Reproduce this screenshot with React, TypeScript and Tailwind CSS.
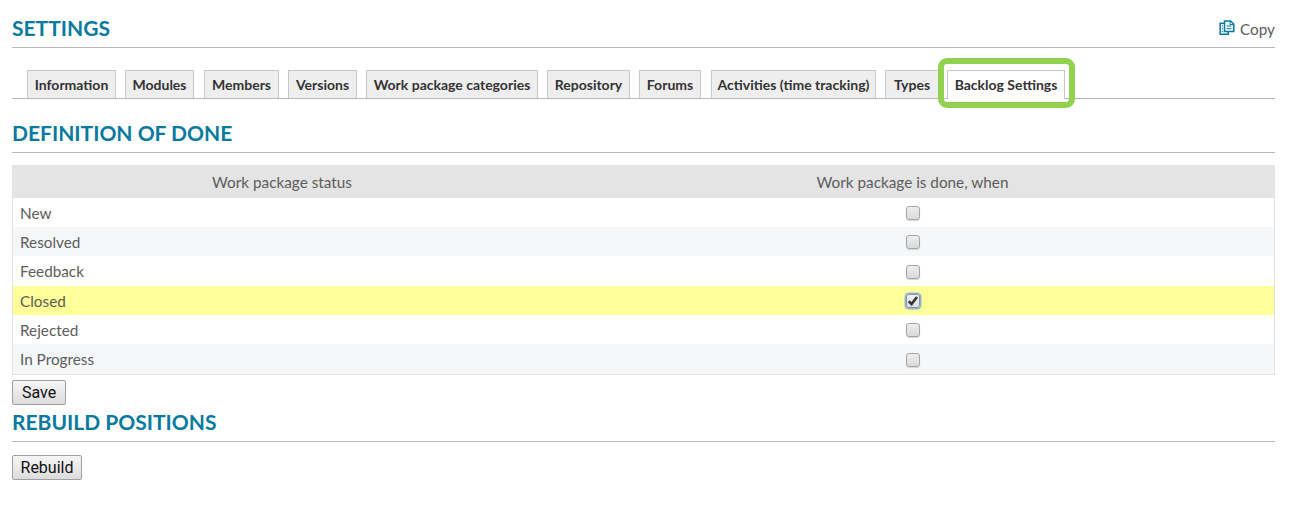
import { useState } from 'react';

const tabs = [
  { label: 'Information', size: 'w-[89px] mr-[9px]' },
  { label: 'Modules', size: 'w-[69px] mr-[10px]' },
  { label: 'Members', size: 'w-[75px] mr-[9px]' },
  { label: 'Versions', size: 'w-[69px] mr-[9px]' },
  { label: 'Work package categories', size: 'w-[172px] mr-[9px]' },
  { label: 'Repository', size: 'w-[83px] mr-[9px]' },
  { label: 'Forums', size: 'w-[62px] mr-[10px]' },
  { label: 'Activities (time tracking)', size: 'w-[165px] mr-[9px]' },
  { label: 'Types', size: 'w-[54px] mr-[8px]' },
  { label: 'Backlog Settings', size: 'w-[118px]', active: true },
];

const statuses = [
  { name: 'New', row: 'h-[29px] bg-white' },
  { name: 'Resolved', row: 'h-[29px] bg-[#f5f7f9]' },
  { name: 'Feedback', row: 'h-[30px] bg-white' },
  { name: 'Closed', row: 'h-[29px] bg-[#ffff99]' },
  { name: 'Rejected', row: 'h-[29px] bg-white' },
  { name: 'In Progress', row: 'h-[30px] bg-[#f5f7f9]' },
];

function CopyIcon() {
  return (
    <svg width="16" height="16" viewBox="0 0 16 16" fill="none" stroke="#067aa3" strokeWidth="1.5">
      <path d="M5 3.2H1.2V14.3H9.3V12" />
      <path d="M5.5 1H11.5L14.8 4V11.6H5.5Z" fill="#fff" />
      <path d="M11 1V4.5H14.8" strokeWidth="1" />
      <path d="M7.5 6H12.5M7.5 8.7H12.5M2.8 6H4M2.8 8.7H4M2.8 11.4H4" strokeWidth="1" />
    </svg>
  );
}

function Checkbox({ checked, onToggle, label }: { checked: boolean; onToggle: () => void; label: string }) {
  return (
    <button
      type="button"
      role="checkbox"
      aria-checked={checked}
      aria-label={label}
      onClick={onToggle}
      className={
        checked
          ? 'flex size-[14px] items-center justify-center rounded-[3px] border border-[#8795a3] bg-linear-to-b from-[#f2f2f5] to-[#dddde5] shadow-[0_0_0_1.5px_#8bb5d6]'
          : 'flex size-[14px] items-center justify-center rounded-[3px] border border-[#a5a5a5] bg-linear-to-b from-[#eeeeee] to-[#dadada] shadow-[0_1px_1px_#d4d4d4]'
      }
    >
      {checked && (
        <svg className="size-[12px] shrink-0" viewBox="0 0 12 12" fill="none" stroke="#333" strokeWidth="2.6">
          <path d="M1.7 6.2L4.6 9L10 2" />
        </svg>
      )}
    </button>
  );
}

const heading = "text-[21px] leading-[26px] font-bold text-[#087a9f]";
const pushButton =
  'block h-[25px] rounded-[2px] border border-[#a0a0a0] bg-linear-to-b from-[#f6f6f6] to-[#dcdcdc] text-[16px] leading-[23px] text-[#111] font-[Roboto,sans-serif]';

export default function App() {
  const [done, setDone] = useState<string[]>(['Closed']);
  const toggle = (name: string) =>
    setDone((list) => (list.includes(name) ? list.filter((n) => n !== name) : [...list, name]));

  return (
    <main className="h-[523px] w-[1294px] bg-white pl-3 pr-[19px] pt-[15px] font-[Lato,sans-serif] text-[#5c5c5c]">
      <header className="flex h-[33px] justify-between border-b border-[#b8b8b8]">
        <h1 className={heading}>SETTINGS</h1>
        <a className="flex h-[29px] items-center gap-[5px] text-[15.3px]">
          <span className="-mt-[4px]"><CopyIcon /></span>
          Copy
        </a>
      </header>
      <nav className="mt-[22px] flex h-[29px] border-b border-[#b8b8b8] pl-[15px]">
        {tabs.map((tab) => (
          <div
            key={tab.label}
            className={`${tab.size} ${tab.active ? 'relative mb-[-1px] bg-white pb-px' : 'bg-[#eeeeee]'} flex shrink-0 items-center justify-center whitespace-nowrap border border-b-0 border-[#c8c8c8] text-[14px] font-bold text-[#333]`}
          >
            {tab.label}
            {tab.active && (
              <span className="absolute -left-[10px] -top-[13px] h-[50px] w-[137px] rounded-[9px] border-[6px] border-[#92d050]" />
            )}
          </div>
        ))}
      </nav>
      <h2 className={`${heading} mt-[21px] h-[33px] border-b border-[#b8b8b8]`}>DEFINITION OF DONE</h2>
      <table className="mt-3 w-full table-fixed border-separate border-spacing-0 border border-[#e4e4e4] text-[15.3px] leading-5">
        <colgroup>
          <col className="w-[538px]" />
          <col />
        </colgroup>
        <thead>
          <tr className="h-[32px] bg-[#e4e4e4]">
            <th className="p-0 font-normal">Work package status</th>
            <th className="p-0 font-normal">Work package is done, when</th>
          </tr>
        </thead>
        <tbody>
          {statuses.map(({ name, row }) => (
            <tr key={name} className={row}>
              <td className="p-0 pl-[7px]">{name}</td>
              <td className="p-0">
                <div className="flex justify-center pt-px">
                  <Checkbox checked={done.includes(name)} onToggle={() => toggle(name)} label={name} />
                </div>
              </td>
            </tr>
          ))}
        </tbody>
      </table>
      <button type="button" className={`${pushButton} mt-[5px] w-[54px]`}>Save</button>
      <h2 className={`${heading} mt-[4px] h-[33px] border-b border-[#b8b8b8]`}>REBUILD POSITIONS</h2>
      <button type="button" className={`${pushButton} mt-[13px] w-[70px]`}>Rebuild</button>
    </main>
  );
}
